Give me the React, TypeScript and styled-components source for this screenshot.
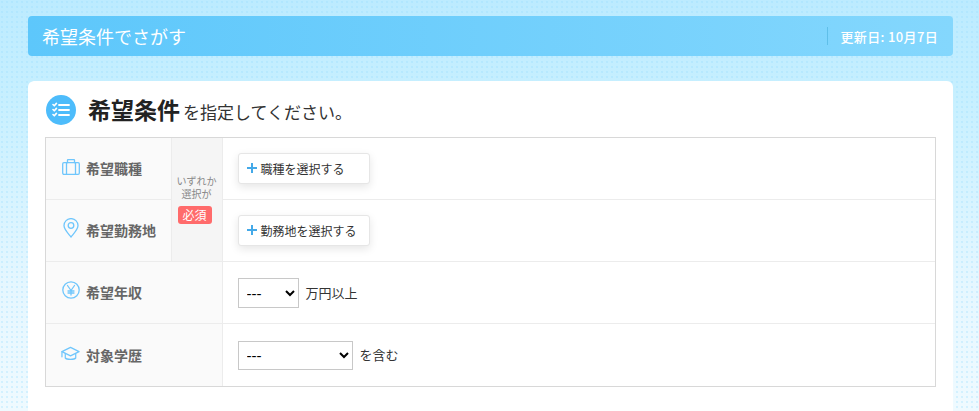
import React from "react";
import styled, { createGlobalStyle } from "styled-components";

const GlobalStyle = createGlobalStyle`
  html, body {
    margin: 0;
    padding: 0;
  }
  body {
    font-family: "Noto Sans CJK JP", "Noto Sans", sans-serif;
    color: #333;
  }
`;

const Page = styled.div`
  box-sizing: border-box;
  height: 411px;
  overflow: hidden;
  padding: 16px 26px 0 28px;
  background-color: #e4f6ff;
  background-image:
    radial-gradient(circle at 2px 2px, rgba(150, 220, 255, 0.3) 1px, transparent 1.2px),
    linear-gradient(180deg, #bcebff 0%, #c8f0ff 25%, #e6f7ff 70%, #effaff 100%);
  background-size: 5px 5px, 100% 100%;
`;

const Header = styled.header`
  display: flex;
  align-items: center;
  justify-content: space-between;
  box-sizing: border-box;
  height: 40px;
  padding: 0 15px 0 14px;
  border-radius: 4px;
  background: linear-gradient(90deg, #5dc7fb 0%, #84d7fd 100%);
  color: #fff;
`;

const HeaderTitle = styled.h1`
  margin: 0;
  font-size: 18px;
  font-weight: 400;
  line-height: 24px;
`;

const UpdatedAt = styled.div`
  display: flex;
  align-items: center;
  height: 18px;
  padding-left: 12px;
  border-left: 1px solid #5fbfe9;
  font-size: 13px;
  font-weight: 500;
  letter-spacing: 0.35px;
`;

const Card = styled.section`
  box-sizing: border-box;
  margin-top: 25px;
  height: 340px;
  padding: 13px 17px 0;
  border-radius: 6px 6px 0 0;
  background: #fff;
`;

const CardHeading = styled.div`
  display: flex;
  align-items: center;
  height: 32px;
  margin-bottom: 11px;
`;

const HeadingBadge = styled.span`
  display: flex;
  align-items: center;
  justify-content: center;
  width: 30px;
  height: 30px;
  margin: 0 12px 0 1px;
  border-radius: 50%;
  background: #4dbcfb;
`;

const HeadingStrong = styled.strong`
  margin: -2px 3px 0 0;
  font-size: 23px;
  font-weight: 700;
  color: #222;
`;

const HeadingRest = styled.span`
  padding-top: 2px;
  font-size: 17px;
  color: #333;
`;

const TableFrame = styled.div`
  width: 891px;
  box-sizing: border-box;
  border: 1px solid #d8d8d8;
`;

const Table = styled.table`
  width: 100%;
  table-layout: fixed;
  border-collapse: collapse;
  border-style: hidden;
`;

const Row = styled.tr<{ $height: number }>`
  height: ${(p) => p.$height}px;
`;

const LabelCell = styled.th`
  box-sizing: border-box;
  padding: 0 0 0 15px;
  border: 1px solid #ececec;
  background: #fafafa;
  text-align: left;
  font-weight: 700;
`;

const Label = styled.div`
  display: flex;
  align-items: center;
  gap: 6px;
  font-size: 14px;
  color: #666;
`;

const IconSlot = styled.span<{ $lift?: number }>`
  display: flex;
  justify-content: center;
  flex: none;
  width: 19px;
  margin-bottom: ${(p) => p.$lift ?? 0}px;
`;

const RequiredCell = styled.td`
  box-sizing: border-box;
  padding: 0;
  border: 1px solid #ececec;
  background: #f5f5f5;
  text-align: center;
  font-size: 10px;
  line-height: 13px;
  color: #888;
`;

const RequiredBadge = styled.span`
  display: block;
  width: 34px;
  margin: 6px 0 0 6px;
  border-radius: 3px;
  background: #ff6b6b;
  color: #fff;
  font-size: 12px;
  line-height: 18px;
`;

const FieldCell = styled.td`
  box-sizing: border-box;
  padding: 0 0 0 15px;
  border: 1px solid #ececec;
  font-size: 13px;
  color: #333;
`;

const Field = styled.div`
  display: flex;
  align-items: center;
  gap: 7px;
`;

const PickButton = styled.button`
  display: flex;
  align-items: center;
  gap: 4px;
  box-sizing: border-box;
  width: 132px;
  height: 31px;
  padding: 0 8px;
  border: 1px solid #e6e6e6;
  border-radius: 3px;
  background: #fff;
  box-shadow: 0 3px 8px rgba(0, 0, 0, 0.1);
  font-family: inherit;
  font-size: 12px;
  color: #333;
`;

const Plus = styled.span`
  flex: none;
  width: 10px;
  height: 10px;
  background:
    linear-gradient(#44a9e8, #44a9e8) center / 100% 2px no-repeat,
    linear-gradient(#44a9e8, #44a9e8) center / 2px 100% no-repeat;
`;

const Select = styled.select<{ $width: number; $height: number }>`
  box-sizing: border-box;
  width: ${(p) => p.$width}px;
  height: ${(p) => p.$height}px;
  margin-top: 2px;
  padding: 0 4px;
  border: 1px solid #c8c8c8;
  border-radius: 0;
  background: #fff;
  font-family: "Liberation Sans", Arial, sans-serif;
  font-size: 15px;
  color: #000;
`;

const iconProps = {
  fill: "none",
  stroke: "#6fc6fc",
  strokeWidth: 1.3,
  strokeLinecap: "round" as const,
  strokeLinejoin: "round" as const,
};

const ListIcon = () => (
  <svg width="18" height="16" viewBox="0 0 18 16" fill="none" stroke="#fff" strokeWidth="1.6" strokeLinecap="round" strokeLinejoin="round">
    <path d="M1 2.5l1.3 1.3L4.4 1.4M1 7.5l1.3 1.3 2.1-2.4M1 12.5l1.3 1.3 2.1-2.4" />
    <path d="M7 3h10M7 8h10M7 13h10" strokeWidth="1.8" />
  </svg>
);

const BagIcon = () => (
  <svg width="18" height="16" viewBox="0 0 18 16" {...iconProps}>
    <rect x="0.7" y="3.7" width="16.6" height="11.6" rx="1.2" />
    <path d="M5.5 3.7V1.2a.6.6 0 0 1 .6-.6h5.8a.6.6 0 0 1 .6.6v2.5M4.5 3.7v11.6M13.5 3.7v11.6" />
  </svg>
);

const PinIcon = () => (
  <svg width="16" height="20" viewBox="0 0 16 20" {...iconProps}>
    <path d="M8 19C4.5 14.8 1 11.4 1 7.6a7 7 0 0 1 14 0C15 11.4 11.5 14.8 8 19z" />
    <circle cx="8" cy="7.5" r="2.8" />
  </svg>
);

const YenIcon = () => (
  <svg width="18" height="18" viewBox="0 0 18 18" {...iconProps}>
    <circle cx="9" cy="9" r="8.2" />
    <path d="M5.5 4.5L9 9.5l3.5-5M9 9.5V14M6 10h6M6 12h6" />
  </svg>
);

const CapIcon = () => (
  <svg width="20" height="16" viewBox="0 0 20 16" {...iconProps}>
    <path d="M10 1L19 5.5 10 10 1 5.5z" />
    <path d="M4.5 7.5v4.7C6 14 14 14 15.5 12.2V7.5M1 5.5v5.5" />
  </svg>
);

const FieldRow: React.FC<{
  height: number;
  icon: React.ReactNode;
  lift?: number;
  label: string;
  extra?: React.ReactNode;
  wide?: boolean;
  children: React.ReactNode;
}> = ({ height, icon, lift, label, extra, wide, children }) => (
  <Row $height={height}>
    <LabelCell colSpan={wide ? 2 : 1}>
      <Label>
        <IconSlot $lift={lift}>{icon}</IconSlot>
        {label}
      </Label>
    </LabelCell>
    {extra}
    <FieldCell>
      <Field>{children}</Field>
    </FieldCell>
  </Row>
);

export default function App() {
  return (
    <>
      <GlobalStyle />
      <Page>
        <Header>
          <HeaderTitle>希望条件でさがす</HeaderTitle>
          <UpdatedAt>更新日: 10月7日</UpdatedAt>
        </Header>
        <Card>
          <CardHeading>
            <HeadingBadge>
              <ListIcon />
            </HeadingBadge>
            <HeadingStrong>希望条件</HeadingStrong>
            <HeadingRest>を指定してください。</HeadingRest>
          </CardHeading>
          <TableFrame>
            <Table>
              <colgroup>
                <col style={{ width: 125 }} />
                <col style={{ width: 51 }} />
                <col />
              </colgroup>
              <tbody>
                <FieldRow
                  height={61}
                  icon={<BagIcon />}
                  lift={2}
                  label="希望職種"
                  extra={
                    <RequiredCell rowSpan={2}>
                      いずれか
                      <br />
                      選択が
                      <RequiredBadge>必須</RequiredBadge>
                    </RequiredCell>
                  }
                >
                  <PickButton type="button">
                    <Plus />
                    職種を選択する
                  </PickButton>
                </FieldRow>
                <FieldRow height={62} icon={<PinIcon />} lift={5} label="希望勤務地">
                  <PickButton type="button">
                    <Plus />
                    勤務地を選択する
                  </PickButton>
                </FieldRow>
                <FieldRow height={62} icon={<YenIcon />} lift={5} label="希望年収" wide>
                  <Select $width={61} $height={30}>
                    <option>---</option>
                  </Select>
                  万円以上
                </FieldRow>
                <FieldRow height={63} icon={<CapIcon />} lift={2} label="対象学歴" wide>
                  <Select $width={115} $height={29}>
                    <option>---</option>
                  </Select>
                  を含む
                </FieldRow>
              </tbody>
            </Table>
          </TableFrame>
        </Card>
      </Page>
    </>
  );
}
